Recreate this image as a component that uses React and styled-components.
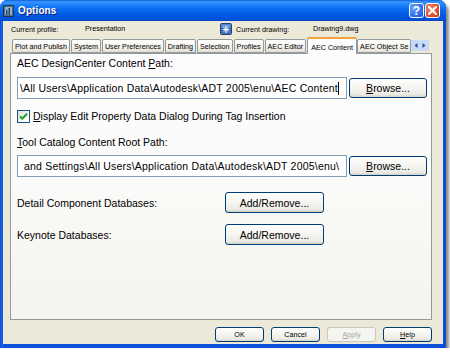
import React from 'react'
import styled, { createGlobalStyle } from 'styled-components'

const GlobalStyle = createGlobalStyle`
  html, body {
    margin: 0;
    padding: 0;
    background: #ffffff;
  }
  body {
    font-family: "Liberation Sans", Arial, sans-serif;
    color: #000;
  }
`

const tabs = [
  'Plot and Publish',
  'System',
  'User Preferences',
  'Drafting',
  'Selection',
  'Profiles',
  'AEC Editor',
  'AEC Content',
  'AEC Object Se'
]

const App = () => (
  <>
    <GlobalStyle />
    <Window>
      <TitleBar>
        <AppIcon />
        <TitleText>Options</TitleText>
        <CaptionButtons>
          <CaptionButton kind='help'>?</CaptionButton>
          <CaptionButton kind='close'>
            <svg width='9' height='9' viewBox='0 0 9 9'>
              <path d='M1 1 L8 8 M8 1 L1 8' stroke='#fff' strokeWidth='2' strokeLinecap='square' />
            </svg>
          </CaptionButton>
        </CaptionButtons>
      </TitleBar>
      <Client>
        <ProfileRow>
          <ProfileCell width={74}>Current profile:</ProfileCell>
          <ProfileCell width={135} raised>Presentation</ProfileCell>
          <DrawingIcon />
          <ProfileCell width={77}>Current drawing:</ProfileCell>
          <ProfileCell raised>Drawing9.dwg</ProfileCell>
        </ProfileRow>
        <TabStrip>
          {tabs.map((t) => (
            <Tab key={t} active={t === 'AEC Content'}>
              {t}
            </Tab>
          ))}
          <TabScroller>
            <ScrollArrow>
              <svg width='4' height='5' viewBox='0 0 4 5'><path d='M3.5 0 L0.5 2.5 L3.5 5 Z' fill='#2A4C9C' /></svg>
            </ScrollArrow>
            <ScrollArrow>
              <svg width='4' height='5' viewBox='0 0 4 5'><path d='M0.5 0 L3.5 2.5 L0.5 5 Z' fill='#2A4C9C' /></svg>
            </ScrollArrow>
          </TabScroller>
        </TabStrip>
        <Panel>
          <FieldLabel>AEC DesignCenter Content <u>P</u>ath:</FieldLabel>
          <FieldRow>
            <PathBox>
              \All Users\Application Data\Autodesk\ADT 2005\enu\AEC Content<Caret />
            </PathBox>
            <Button w={78} h={20} big><u>B</u>rowse...</Button>
          </FieldRow>
          <CheckRow>
            <CheckBox>
              <svg width='9' height='9' viewBox='0 0 9 9'>
                <path d='M1 4.2 L3.4 6.6 L8 1.8' fill='none' stroke='#21A121' strokeWidth='2' />
              </svg>
            </CheckBox>
            <span><u>D</u>isplay Edit Property Data Dialog During Tag Insertion</span>
          </CheckRow>
          <FieldLabel gap={12}><u>T</u>ool Catalog Content Root Path:</FieldLabel>
          <FieldRow gap={6}>
            <PathBox indent={4}>and Settings\All Users\Application Data\Autodesk\ADT 2005\enu\</PathBox>
            <Button w={78} h={20} big><u>B</u>rowse...</Button>
          </FieldRow>
          <DbRow gap={15}>
            <DbLabel>Detail Component Databases:</DbLabel>
            <Button w={99} h={21} big>Add/Remove...</Button>
          </DbRow>
          <DbRow gap={11}>
            <DbLabel>Keynote Databases:</DbLabel>
            <Button w={99} h={21} big>Add/Remove...</Button>
          </DbRow>
        </Panel>
        <ButtonBar>
          <Button w={49} h={15}>OK</Button>
          <Button w={49} h={15}>Cancel</Button>
          <Button w={49} h={15} disabled><u>A</u>pply</Button>
          <Button w={49} h={15}><u>H</u>elp</Button>
        </ButtonBar>
      </Client>
    </Window>
  </>
)

const AppIcon = () => (
  <svg width='11' height='12' viewBox='0 0 11 12'>
    <rect x='0.5' y='0.5' width='10' height='11' fill='#4A6E8C' stroke='#1F3550' />
    <rect x='2' y='2' width='7' height='8' fill='#8FB2CC' />
    <rect x='3' y='5' width='1.5' height='5' fill='#2A4866' />
    <rect x='5.5' y='3' width='1.5' height='7' fill='#2A4866' />
  </svg>
)

const DrawingIcon = () => (
  <DrawingIconBox>
    <svg width='12' height='12' viewBox='0 0 12 12'>
      <rect x='0.5' y='0.5' width='11' height='11' rx='1' fill='#3E6FB8' stroke='#23457E' />
      <rect x='1.5' y='1.5' width='9' height='3' fill='#6F9BD8' />
      <path d='M6 3 L6 10 M2.8 6.5 L9.2 6.5 M3.8 4.3 L8.2 8.7 M8.2 4.3 L3.8 8.7' stroke='#fff' strokeWidth='1' />
    </svg>
  </DrawingIconBox>
)

const Window = styled.div`
  width: 446px;
  height: 348px;
  display: flex;
  flex-direction: column;
  background: linear-gradient(90deg, #0A4FD6, #1C63EA 2px, #0A50D8 4px);
  border-radius: 7px 7px 0 0;
  box-shadow: 3px 4px 3px rgba(0, 0, 0, 0.45);
`

const TitleBar = styled.div`
  height: 21px;
  display: flex;
  align-items: center;
  padding: 0 6px 0 3px;
  border-radius: 7px 7px 0 0;
  background: linear-gradient(180deg, #0A5FD8 0%, #3D95FF 9%, #2085FB 20%, #0A6AF0 45%, #0058E4 75%, #0052DC 90%, #0046C4 100%);
`

const TitleText = styled.span`
  margin-left: 4px;
  color: #ffffff;
  font-weight: bold;
  font-size: 10px;
  letter-spacing: 0.1px;
  text-shadow: 1px 1px 0 #0A1E6E;
`

const CaptionButtons = styled.div`
  margin-left: auto;
  display: flex;
  gap: 1px;
`

const CaptionButton = styled.div`
  width: 15px;
  height: 15px;
  box-sizing: border-box;
  border: 1px solid #ffffff;
  border-radius: 3px;
  display: flex;
  align-items: center;
  justify-content: center;
  color: #ffffff;
  font-weight: bold;
  font-size: 12px;
  background: ${(p) => (p.kind === 'close'
    ? 'radial-gradient(circle at 30% 30%, #F08A6C, #E0512B 60%, #C23A12)'
    : 'radial-gradient(circle at 30% 30%, #6FA4FF, #2F72EA 60%, #1C55D0)')};
`

const Client = styled.div`
  flex: 1;
  margin: 0 3px 4px 3px;
  padding: 0 11px 2px 7px;
  background: #ECE9D8;
  display: flex;
  flex-direction: column;
`

const ProfileRow = styled.div`
  height: 16px;
  display: flex;
  align-items: center;
  padding-left: 1px;
  font-size: 7.2px;
`

const ProfileCell = styled.span`
  width: ${(p) => (p.width ? `${p.width}px` : 'auto')};
  flex: none;
  position: relative;
  top: ${(p) => (p.raised ? '-1px' : '0')};
`

const DrawingIconBox = styled.span`
  width: 16px;
  flex: none;
  display: flex;
  align-items: center;
`

const TabStrip = styled.div`
  height: 16px;
  display: flex;
  align-items: flex-end;
  padding-left: 2px;
  position: relative;
  z-index: 1;
`

const Tab = styled.div`
  box-sizing: border-box;
  height: ${(p) => (p.active ? '17px' : '14px')};
  margin-right: ${(p) => (p.active ? '0' : '1px')};
  margin-bottom: ${(p) => (p.active ? '-1px' : '0')};
  padding: ${(p) => (p.active ? '2px 3px 0' : '1px 2px 0')};
  display: flex;
  align-items: center;
  font-size: 7.2px;
  white-space: nowrap;
  flex: none;
  border: 1px solid #919B9C;
  border-bottom: ${(p) => (p.active ? 'none' : '1px solid #919B9C')};
  border-top: ${(p) => (p.active ? '2px solid #F2A33A' : '1px solid #919B9C')};
  border-radius: 2px 2px 0 0;
  background: ${(p) => (p.active ? '#FCFCFE' : 'linear-gradient(180deg, #FFFFFF, #F3F2EC 60%, #E2E0D6)')};
`

const TabScroller = styled.div`
  display: flex;
  align-self: flex-start;
  margin-top: 3px;
  margin-left: -1px;
  padding: 0 1px;
  background: #C9DAF6;
`

const ScrollArrow = styled.span`
  width: 8px;
  height: 11px;
  display: flex;
  align-items: center;
  justify-content: center;
`

const Panel = styled.div`
  height: 267px;
  box-sizing: border-box;
  flex: none;
  border: 1px solid #919B9C;
  background: linear-gradient(180deg, #FCFCFE 0%, #FAFAF8 50%, #F4F3EE 100%);
  padding: 2px 0 0 6px;
  display: flex;
  flex-direction: column;
  font-size: 10.5px;
`

const FieldLabel = styled.div`
  line-height: 14px;
  margin-top: ${(p) => (p.gap ? `${p.gap}px` : '0')};
`

const FieldRow = styled.div`
  display: flex;
  align-items: center;
  gap: 2px;
  margin-top: ${(p) => (p.gap ? `${p.gap}px` : '7px')};
`

const PathBox = styled.div`
  width: 330px;
  height: 22px;
  box-sizing: border-box;
  border: 1px solid #7F9DB9;
  background: #ffffff;
  padding-left: ${(p) => (p.indent ? `${p.indent + 2}px` : '2px')};
  display: flex;
  align-items: center;
  white-space: nowrap;
  overflow: hidden;
  letter-spacing: 0.2px;
`

const Caret = styled.span`
  display: inline-block;
  width: 1px;
  height: 13px;
  background: #000;
`

const CheckRow = styled.div`
  display: flex;
  align-items: center;
  gap: 3px;
  margin-top: 10px;
  height: 14px;
`

const CheckBox = styled.span`
  width: 13px;
  height: 13px;
  box-sizing: border-box;
  border: 1px solid #1C5180;
  background: linear-gradient(135deg, #DCDCD7, #FFFFFF 80%);
  display: flex;
  align-items: center;
  justify-content: center;
`

const DbRow = styled.div`
  display: flex;
  align-items: center;
  margin-top: ${(p) => p.gap}px;
`

const DbLabel = styled.span`
  width: 208px;
  flex: none;
`

const Button = styled.div`
  width: ${(p) => p.w}px;
  height: ${(p) => p.h}px;
  box-sizing: border-box;
  flex: none;
  display: flex;
  align-items: center;
  justify-content: center;
  font-size: ${(p) => (p.big ? '10.5px' : '7.2px')};
  color: ${(p) => (p.disabled ? '#A8A797' : '#000')};
  border: 1px solid ${(p) => (p.disabled ? '#C9C7BA' : '#003C74')};
  border-radius: 3px;
  background: ${(p) => (p.disabled ? '#F4F4F0' : 'linear-gradient(180deg, #FFFFFF 0%, #F5F4EF 50%, #ECEBE6 85%, #D6D0C5 100%)')};
`

const ButtonBar = styled.div`
  display: flex;
  justify-content: flex-end;
  gap: 7px;
  margin-top: 7px;
`

export default App
